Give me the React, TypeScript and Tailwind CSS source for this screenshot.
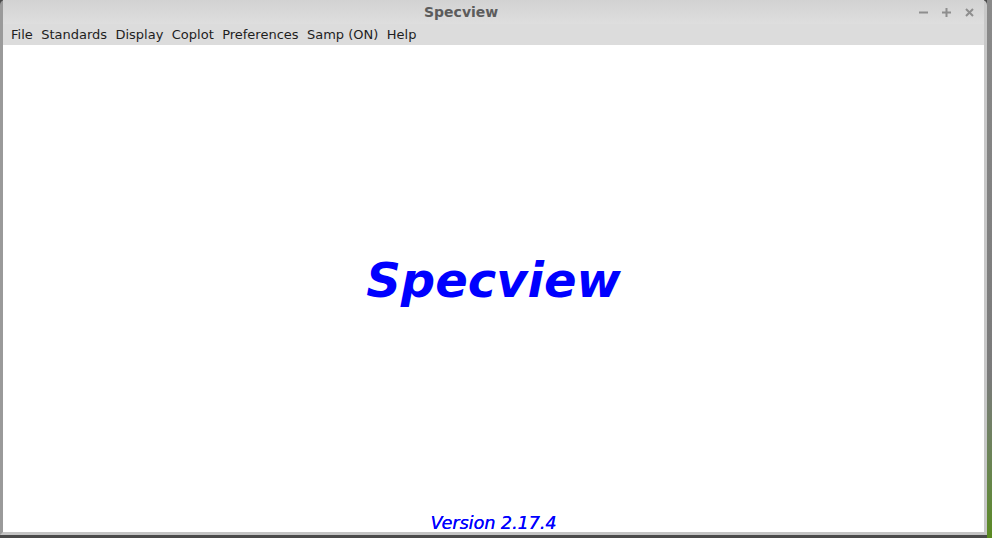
import React from "react";

const menus = ["File", "Standards", "Display", "Coplot", "Preferences", "Samp (ON)", "Help"];

const App = () => {
	return (
		<div className="flex w-[992px] h-[538px] bg-[#4a4a4a] overflow-hidden font-['DejaVu_Sans',sans-serif]">
			<div className="flex flex-col w-[987px] h-[535px] rounded-tl-[5px] rounded-tr-[5px] border-l-[3px] border-r-[3px] border-b-[3px] border-l-[#9a9a9a] border-r-[#c8c8c8] border-b-[#c4c4c4] bg-[#d9d9d9]">
				<div className="relative flex items-center h-[24px] bg-gradient-to-b from-[#d2d2d2] to-[#dedede]">
					<div className="flex-1 pl-[421px] text-[14px] font-bold text-[#5c5c5c]">Specview</div>
					<div className="flex items-center gap-[14px] pr-[10px] pt-[1px] text-[#8e8e8e]">
						<svg width="9" height="9" viewBox="0 0 9 9">
							<rect x="0" y="3.5" width="9" height="2" fill="currentColor" />
						</svg>
						<svg width="9" height="9" viewBox="0 0 9 9">
							<rect x="0" y="3.5" width="9" height="2" fill="currentColor" />
							<rect x="3.5" y="0" width="2" height="9" fill="currentColor" />
						</svg>
						<svg width="9" height="9" viewBox="0 0 9 9">
							<path d="M1 1 L8 8 M8 1 L1 8" stroke="currentColor" strokeWidth="2" />
						</svg>
					</div>
				</div>
				<div className="flex items-center h-[21px] pl-[8px] pt-[1px] gap-[8.4px] bg-[#dcdcdc] text-[13px] text-[#1e1e1e]">
					{menus.map((m) => (
						<span key={m}>{m}</span>
					))}
				</div>
				<div className="flex flex-col flex-1 bg-white">
					<div className="flex flex-1 items-center justify-center pt-[2px]">
						<span className="text-[48px] font-bold italic text-[#0000ff]">Specview</span>
					</div>
					<div className="flex justify-center h-[19px] leading-[20px]">
						<span className="text-[17.5px] italic text-[#0000ff] [text-shadow:0.3px_0_0_#0000ff]">Version 2.17.4</span>
					</div>
				</div>
			</div>
			<div className="flex-1 bg-gradient-to-b from-[#8a8a8a] via-[#7a7a7a] via-70% to-[#5a8a1e]"></div>
		</div>
	);
};

export default App;
